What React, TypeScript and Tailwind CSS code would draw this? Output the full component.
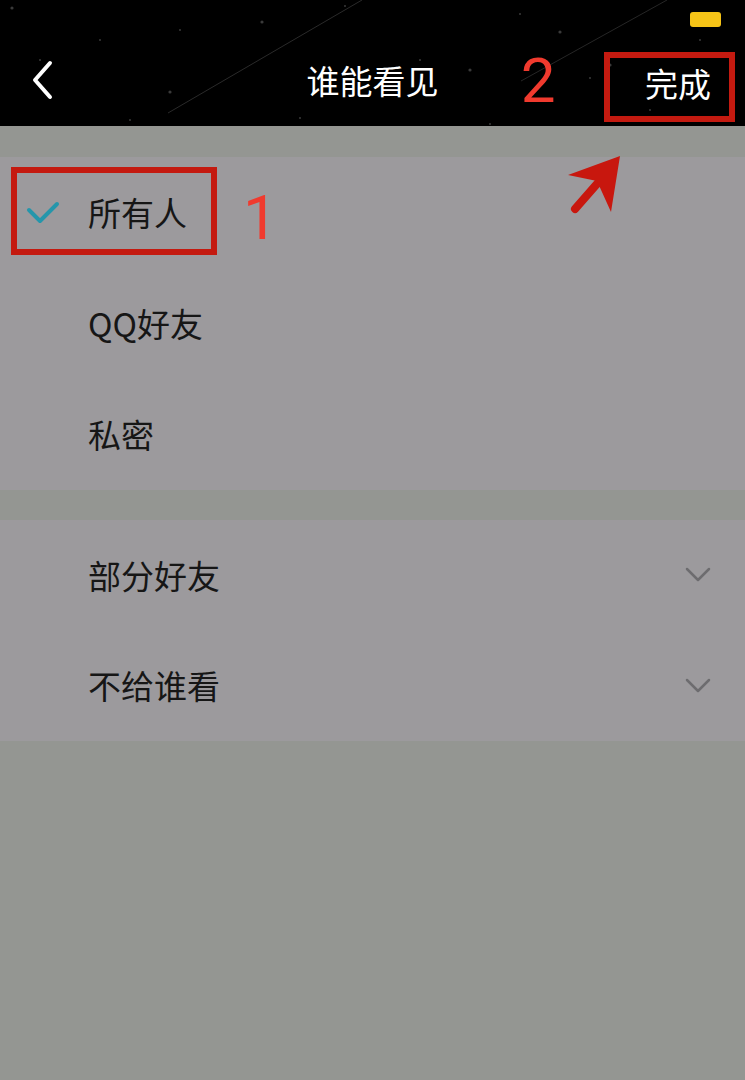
import { ReactNode } from "react";

const cjk = { fontFamily: '"Noto Sans CJK SC", "Noto Sans", sans-serif' };
const digit = { fontFamily: 'Roboto, "Liberation Sans", sans-serif' };

function StarField() {
  const dots = [
    [12, 8], [100, 40], [180, 30], [262, 22], [345, 6], [420, 60], [470, 70],
    [520, 14], [590, 78], [610, 65], [650, 110], [700, 40], [170, 92], [130, 120],
    [490, 124], [560, 32], [40, 60], [300, 118],
  ];
  return (
    <svg className="absolute inset-0 h-full w-full" viewBox="0 0 745 126" preserveAspectRatio="none">
      <line x1="168" y1="113" x2="362" y2="0" stroke="#2a2a2a" strokeWidth="1" />
      <line x1="521" y1="81" x2="667" y2="0" stroke="#262626" strokeWidth="1" />
      {dots.map(([x, y], i) => (
        <circle key={i} cx={x} cy={y} r={i % 3 === 0 ? 1.6 : 1} fill="#3a3a3a" />
      ))}
    </svg>
  );
}

function Row({ label, children, h = "h-[111px]" }: { label: string; children?: ReactNode; h?: string }) {
  return (
    <div className={`relative flex ${h} items-center pl-[88px] pr-[34px]`}>
      <span className="flex-1 text-[33px] leading-none text-[#161616]" style={cjk}>
        {label}
      </span>
      {children}
    </div>
  );
}

function ChevronDown() {
  return (
    <svg width="26" height="16" viewBox="0 0 26 16" fill="none">
      <path d="M2 2l11 11L24 2" stroke="#6d6c6f" strokeWidth="2.5" strokeLinecap="round" strokeLinejoin="round" />
    </svg>
  );
}

export default function App() {
  return (
    <div className="relative h-[1080px] w-[745px] overflow-hidden bg-[#949692]">
      {/* top bar */}
      <div className="relative h-[126px] bg-black">
        <StarField />
        <div className="relative flex h-[40px] justify-end pr-[24px] pt-[12px]">
          <div className="h-[15px] w-[31px] rounded-[3px] bg-[#f6c417]" />
        </div>
        <div className="relative grid h-[86px] grid-cols-3 items-center">
          <div className="pl-[30px] pb-[6px]">
            <svg width="26" height="40" viewBox="0 0 26 40" fill="none">
              <path d="M20 3L5 20l15 17" stroke="#fff" strokeWidth="4" strokeLinecap="round" strokeLinejoin="round" />
            </svg>
          </div>
          <div className="pb-[6px] text-center text-[33px] leading-none text-white" style={cjk}>
            谁能看见
          </div>
          <div className="flex items-center pl-[24px]">
            <span className="pb-[4px] text-[62px] leading-none text-[#f03a2e]" style={digit}>
              2
            </span>
            <div className="ml-auto mr-[10px] mt-[8px] flex h-[70px] w-[131px] items-center justify-end border-[6px] border-[#c41a10] pb-[8px] pr-[18px]">
              <span className="text-[33px] leading-none text-white" style={cjk}>
                完成
              </span>
            </div>
          </div>
        </div>
      </div>

      {/* visibility options */}
      <div className="mt-[31px] bg-[#9c9a9d]">
        <Row label="所有人">
          <svg className="absolute left-[26px] top-[44px]" width="34" height="24" viewBox="0 0 34 24" fill="none">
            <path d="M3 9l11 11L31 3" stroke="#2596ab" strokeWidth="4" strokeLinecap="round" strokeLinejoin="round" />
          </svg>
          <div className="absolute left-[11px] top-[10px] h-[88px] w-[206px] border-[6px] border-[#c41a10]" />
          <span
            className="absolute left-[243px] top-[30px] text-[62px] leading-none text-[#f03a2e]"
            style={digit}
          >
            1
          </span>
        </Row>
        <Row label="QQ好友" />
        <Row label="私密" />
      </div>

      <div className="mt-[30px] bg-[#9c9a9d]">
        <Row label="部分好友" h="h-[110px]">
          <ChevronDown />
        </Row>
        <Row label="不给谁看">
          <ChevronDown />
        </Row>
      </div>

      {/* pointer toward the done button */}
      <svg className="absolute left-[560px] top-[150px]" width="70" height="70" viewBox="560 150 70 70" fill="none">
        <line x1="575" y1="209" x2="603" y2="177" stroke="#c8170e" strokeWidth="8" strokeLinecap="round" />
        <polygon points="620,156 568,175 597,181 611,212" fill="#c8170e" />
      </svg>
    </div>
  );
}
